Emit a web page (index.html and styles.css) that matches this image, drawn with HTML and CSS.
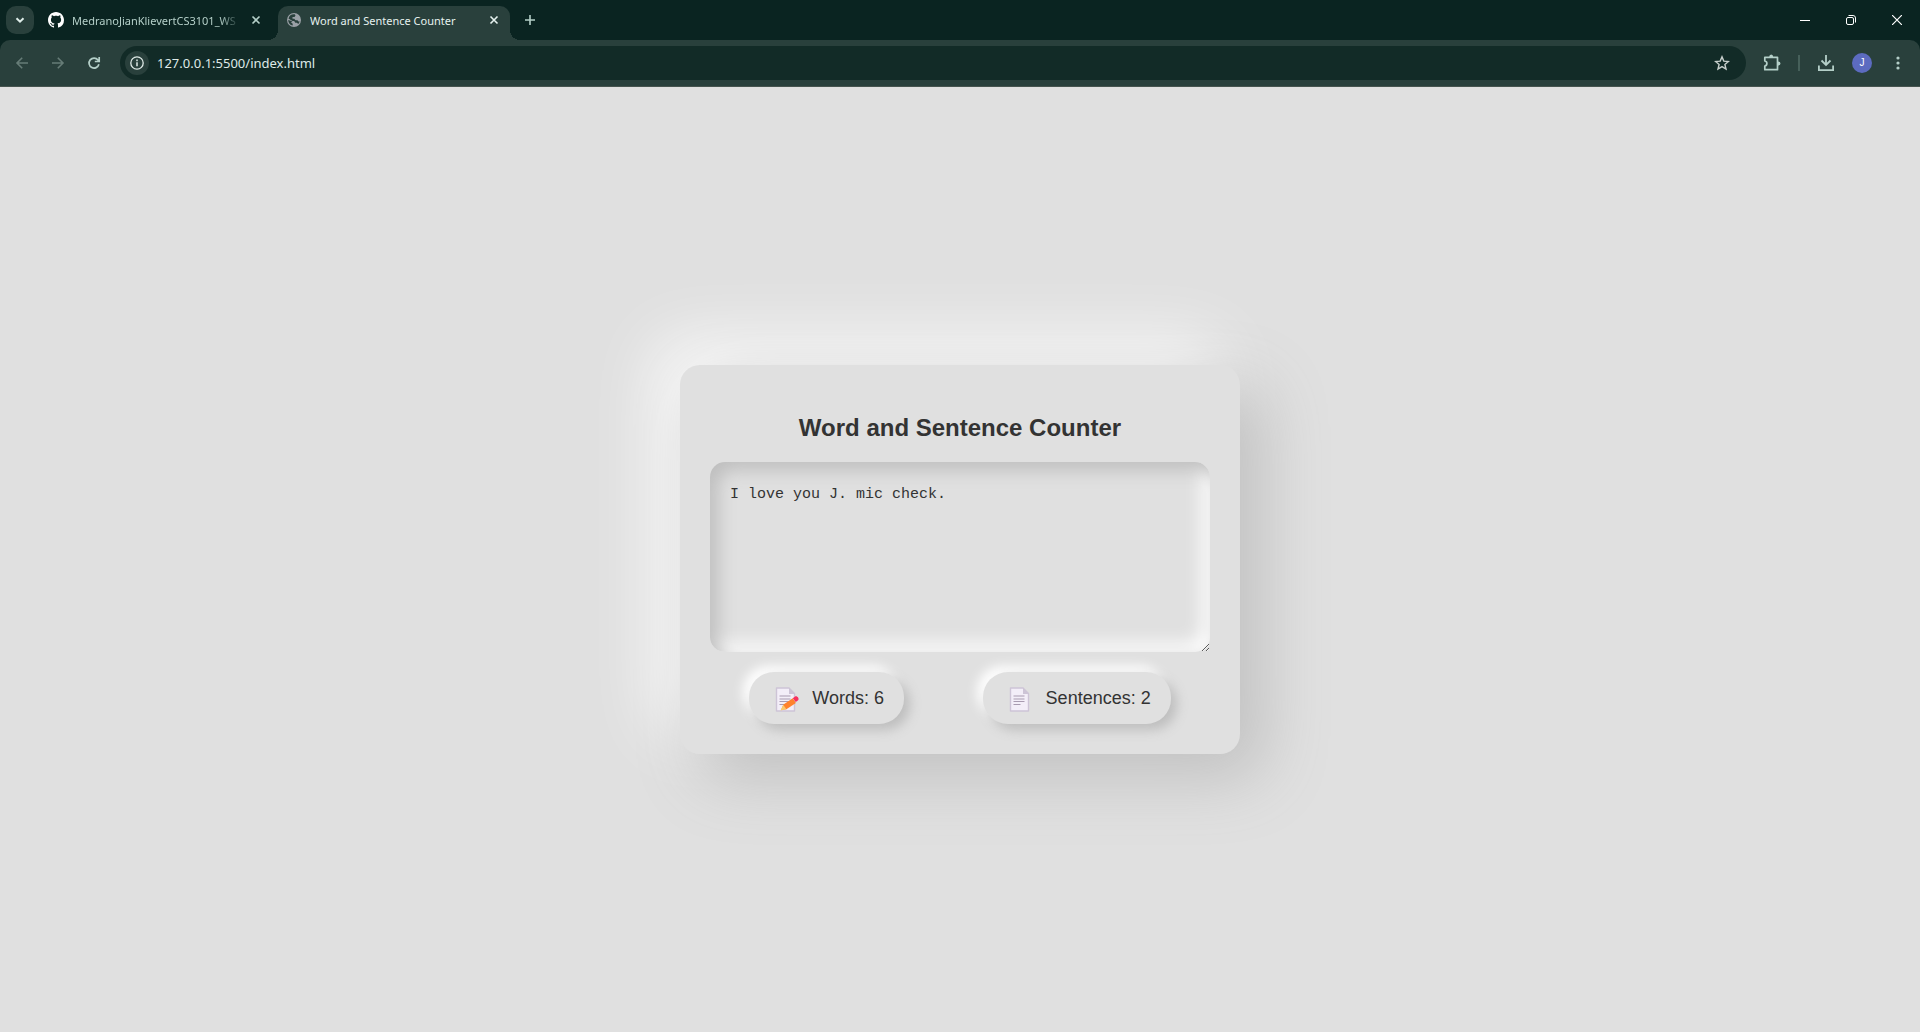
FILE: index.html
```html
<!DOCTYPE html>
<html lang="en">
<head>
<meta charset="utf-8">
<title>Word and Sentence Counter</title>
<link rel="stylesheet" href="styles.css">
</head>
<body>
<header class="browser">
  <div class="tabstrip">
    <button class="tab-search" aria-label="Search tabs"><svg width="12" height="12" viewBox="0 0 12 12"><path d="M2.500 4.200 6 7.700l3.500-3.500" fill="none" stroke="currentColor" stroke-width="2"/></svg></button>
    <div class="tab">
      <svg class="favicon github" width="16" height="16" viewBox="0 0 16 16"><path fill="#fff" d="M8 0C3.580 0 0 3.580 0 8c0 3.540 2.290 6.530 5.470 7.590.4.070.550-.170.550-.380 0-.190-.010-.820-.010-1.490-2.010.370-2.530-.490-2.690-.940-.090-.230-.480-.940-.820-1.130-.280-.150-.680-.520-.010-.530.630-.010 1.080.580 1.230.820.720 1.210 1.870.870 2.330.660.070-.520.280-.870.510-1.070-1.780-.2-3.640-.890-3.640-3.950 0-.870.310-1.590.820-2.150-.080-.2-.360-1.020.080-2.120 0 0 .670-.210 2.200.820.640-.180 1.320-.270 2-.270s1.360.090 2 .270c1.530-1.040 2.200-.820 2.200-.820.440 1.100.160 1.920.080 2.120.510.560.820 1.270.820 2.150 0 3.070-1.870 3.750-3.650 3.950.290.250.540.730.540 1.480 0 1.070-.010 1.930-.010 2.200 0 .210.150.460.550.380A8.010 8.010 0 0 0 16 8c0-4.420-3.580-8-8-8Z"/></svg>
      <span class="tab-title">MedranoJianKlievertCS3101_WS</span>
      <button class="tab-close" aria-label="Close tab"><svg width="10" height="10" viewBox="0 0 10 10"><path d="m1.500 1.500 7 7m0-7-7 7" stroke="currentColor" stroke-width="1.600"/></svg></button>
    </div>
    <div class="tab active">
      <svg class="favicon" width="16" height="16" viewBox="0 0 16 16"><circle cx="8" cy="8" r="7" fill="#9aa0a6"/><path fill="#29403c" d="M8.800 2.300 9.500 3.500 8.500 5H6.500v1.800h1.800l1.200 1.400h2l1 1.300h1.200a5.800 5.800 0 0 1-1.400 2.400l-1.400-1.200H9.300L8.200 9H5.500L2.200 7.900c0 2.800 1.900 5.100 4.500 5.700v-1.800L5 10.200l1.500-1.200-4-2.600A5.800 5.800 0 0 1 8.800 2.300Z"/></svg>
      <span class="tab-title">Word and Sentence Counter</span>
      <button class="tab-close" aria-label="Close tab"><svg width="10" height="10" viewBox="0 0 10 10"><path d="m1.500 1.500 7 7m0-7-7 7" stroke="currentColor" stroke-width="1.600"/></svg></button>
    </div>
    <button class="new-tab" aria-label="New tab"><svg width="12" height="12" viewBox="0 0 12 12"><path d="M6 1v10M1 6h10" stroke="currentColor" stroke-width="1.600"/></svg></button>
    <div class="window-controls">
      <button aria-label="Minimize"><svg width="10" height="10" viewBox="0 0 10 10"><path d="M0 5.500h10" stroke="currentColor"/></svg></button>
      <button aria-label="Restore"><svg width="10" height="10" viewBox="0 0 10 10" fill="none" stroke="currentColor"><rect x=".5" y="2.500" width="7" height="7" rx="1.500"/><path d="M2.500.5H7a2.500 2.500 0 0 1 2.500 2.500v4.500"/></svg></button>
      <button aria-label="Close window"><svg width="10" height="10" viewBox="0 0 10 10"><path d="m0 0 10 10M10 0 0 10" stroke="currentColor" stroke-width="1.200"/></svg></button>
    </div>
  </div>
  <div class="toolbar">
    <button class="nav" disabled aria-label="Back"><svg width="16" height="16" viewBox="0 0 16 16"><path d="M14 8H3m5.200-5.200L3 8l5.200 5.200" fill="none" stroke="currentColor" stroke-width="1.600"/></svg></button>
    <button class="nav" disabled aria-label="Forward"><svg width="16" height="16" viewBox="0 0 16 16"><path d="M2 8h11M7.800 2.800 13 8l-5.200 5.200" fill="none" stroke="currentColor" stroke-width="1.600"/></svg></button>
    <button class="nav" aria-label="Reload"><svg width="16" height="16" viewBox="0 0 16 16"><path d="M12.900 9.300A5 5 0 1 1 12 5l1 1.300M13.200 2v4.500H8.800" fill="none" stroke="currentColor" stroke-width="1.700"/></svg></button>
    <div class="omnibox">
      <button class="site-info" aria-label="View site information"><svg width="16" height="16" viewBox="0 0 16 16"><circle cx="8" cy="8" r="6.200" fill="none" stroke="currentColor" stroke-width="1.300"/><path d="M8 7.200v4M8 4.600v1.600" stroke="currentColor" stroke-width="1.500"/></svg></button>
      <input class="url" type="text" value="127.0.0.1:5500/index.html" aria-label="Address">
      <button class="star" aria-label="Bookmark this tab"><svg width="16" height="16" viewBox="0 0 16 16"><path d="m8 1.900 1.800 4.200 4.600.4-3.500 3 1.100 4.500L8 11.600 4 14l1.100-4.500-3.500-3 4.600-.4Z" fill="none" stroke="currentColor" stroke-width="1.400"/></svg></button>
    </div>
    <button class="action" aria-label="Extensions"><svg width="20" height="20" viewBox="0 0 20 20"><path d="M2.800 4.300H15.500V16.700H2.800V13C5.600 12.500 5.600 8.500 2.800 8Z" fill="none" stroke="currentColor" stroke-width="1.700" stroke-linejoin="round"/><path d="M7.200 4a2 2.500 0 0 1 4 0ZM16 8.500a2.500 2 0 0 1 0 4Z" fill="currentColor"/></svg></button>
    <span class="divider"></span>
    <button class="action" aria-label="Downloads"><svg width="20" height="20" viewBox="0 0 20 20"><path d="M10 2v9.500M5.500 7.500 10 12l4.500-4.500M2.900 12.500v4.600h14.200v-4.600" fill="none" stroke="currentColor" stroke-width="1.800"/></svg></button>
    <button class="action" aria-label="Profile"><span class="avatar">J</span></button>
    <button class="action" aria-label="Menu"><svg width="16" height="16" viewBox="0 0 16 16" fill="currentColor"><circle cx="8" cy="3" r="1.600"/><circle cx="8" cy="8" r="1.600"/><circle cx="8" cy="13" r="1.600"/></svg></button>
  </div>
</header>
<main class="page">
  <section class="container">
    <h2 class="heading"><label for="text-input">Word and Sentence Counter</label></h2>
    <textarea class="text-input" id="text-input" spellcheck="false">I love you J. mic check.</textarea>
    <div class="counters">
      <div class="counter">
        <svg class="counter-icon" width="33" height="32" viewBox="0 0 33 32"><path d="M7.500 6H20l5.500 5.500V29h-18Z" fill="#f3eef8" stroke="#cdc4d6" stroke-width="1.400" stroke-linejoin="round"/><path d="M20 5.500V12h6Z" fill="#cdc4d6"/><path d="M10.500 14h11m-11 3h11m-11 2.500h11m-11 3h6" stroke="#a89bb0"/><path d="m12 28 2.500-5.500 9.200-6.200 3.200 4.600-9.500 6.400Z" fill="#ff822d"/><path d="m11.500 28.500 2.700-5.800 3.200 4.600Z" fill="#f9c86b"/><path d="m23.800 16.200 2-1.500c1.300-.9 2.600-.2 3.300.9.800 1.200.6 2.300-.3 3l-2 1.500Z" fill="#f8315f"/></svg>
        <span>Words: 6</span>
      </div>
      <div class="counter">
        <svg class="counter-icon" width="33" height="32" viewBox="0 0 33 32"><path d="M7.500 6H20l5.500 5.500V29h-18Z" fill="#f3eef8" stroke="#cdc4d6" stroke-width="1.400" stroke-linejoin="round"/><path d="M20 5.500V12h6Z" fill="#cdc4d6"/><path d="M10.500 14h11m-11 3h11m-11 2.500h11m-11 3h7" stroke="#a89bb0"/></svg>
        <span>Sentences: 2</span>
      </div>
    </div>
  </section>
</main>
</body>
</html>
```
FILE: styles.css
```css
* {
  box-sizing: border-box;
}

body {
  margin: 0;
  min-height: 100vh;
  display: flex;
  flex-direction: column;
  background: #e0e0e0;
  color: #333;
  font-family: "Liberation Sans", Arial, sans-serif;
}

button {
  display: flex;
  align-items: center;
  justify-content: center;
  padding: 0;
  border: 0;
  background: none;
  color: inherit;
}

svg {
  display: block;
  flex: none;
}

/* Browser frame */
.browser {
  background: #0a2421;
  color: #b4cfc8;
  font-family: "Noto Sans", "Open Sans", sans-serif;
}

.tabstrip {
  display: flex;
  height: 40px;
  padding: 6px 0 0 6px;
}

.tab-search {
  width: 28px;
  height: 28px;
  border-radius: 10px;
  background: #29403c;
  color: #dfeeea;
}

.tab {
  position: relative;
  display: flex;
  align-items: center;
  width: 232px;
  height: 34px;
  margin-left: 6px;
  padding: 0 8px 6px;
  font-size: 11px;
}

.tab.active {
  border-radius: 10px 10px 0 0;
  background: #29403c;
  color: #e6f2ef;
}

/* Curved feet that join the selected tab to the toolbar */
.tab.active::before,
.tab.active::after {
  content: "";
  position: absolute;
  bottom: 0;
  width: 10px;
  height: 10px;
}

.tab.active::before {
  right: 100%;
  background: radial-gradient(circle at 0 0, transparent 10px, #29403c 10px);
}

.tab.active::after {
  left: 100%;
  background: radial-gradient(circle at 100% 0, transparent 10px, #29403c 10px);
}

.tab-title {
  flex: 1;
  margin: 0 8px;
  overflow: hidden;
  white-space: nowrap;
}

.tab:not(.active) .tab-title {
  mask-image: linear-gradient(to right, #000 88%, transparent);
}

.tab-close {
  width: 16px;
  height: 16px;
}

.new-tab {
  width: 28px;
  height: 28px;
  margin-left: 6px;
}

.window-controls {
  display: flex;
  margin-left: auto;
  color: #fff;
}

.window-controls button {
  width: 46px;
  height: 28px;
}

.toolbar {
  display: flex;
  align-items: center;
  height: 47px;
  padding: 0 4px;
  border-bottom: 1px solid #46544f;
  border-radius: 10px 10px 0 0;
  background: #29403c;
}

.nav,
.action {
  width: 36px;
  height: 34px;
}

.nav:disabled {
  color: #667c77;
}

.omnibox {
  display: flex;
  flex: 1;
  align-items: center;
  height: 34px;
  margin: 0 8px;
  padding: 0 16px 0 5px;
  border-radius: 17px;
  background: #122b27;
}

.site-info {
  width: 24px;
  height: 24px;
  border-radius: 50%;
  background: #29403c;
  color: #dfeae7;
}

.url {
  flex: 1;
  min-width: 0;
  margin-left: 8px;
  padding: 0;
  border: 0;
  outline: 0;
  background: none;
  color: #dfeae7;
  font-family: inherit;
  font-size: 13px;
}

.star {
  color: #c7cfcc;
}

.divider {
  width: 2px;
  height: 16px;
  margin: 0 8px;
  background: #46605a;
}

.avatar {
  width: 20px;
  height: 20px;
  border-radius: 50%;
  background: #5c6bc0;
  color: #fff;
  font-size: 10px;
  line-height: 20px;
}

/* Page */
.page {
  display: flex;
  flex: 1;
  align-items: center;
  justify-content: center;
}

.container {
  width: 560px;
  max-width: 100%;
  padding: 30px;
  border-radius: 20px;
  background: #e0e0e0;
  box-shadow: 22px 22px 66px #bebebe, -22px -22px 66px #fff;
  text-align: center;
}

.heading {
  margin: 20px 0 22px;
  font-size: 24px;
  line-height: 25px;
}

.text-input {
  display: block;
  width: 100%;
  height: 190px;
  padding: 20px;
  border: 0;
  border-radius: 15px;
  outline: 0;
  background: #e0e0e0;
  box-shadow: inset 8px 8px 18px #bebebe, inset -8px -8px 18px #fff;
  color: #333;
  font-family: "Liberation Mono", monospace;
  font-size: 15px;
  line-height: 26px;
}

.counters {
  display: flex;
  justify-content: space-around;
  margin-top: 20px;
}

.counter {
  display: flex;
  align-items: center;
  gap: 10px;
  padding: 10px 20px;
  border-radius: 25px;
  box-shadow: 6px 6px 12px #bebebe, -6px -6px 12px #fff;
  font-size: 18px;
}
```
